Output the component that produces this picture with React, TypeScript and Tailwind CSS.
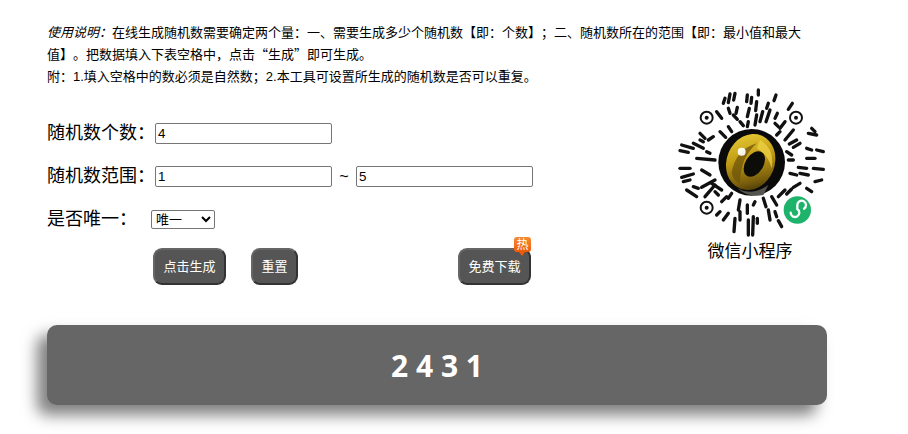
const bars: number[][] = [
  [210, 42, 205, 68], [225, 40, 221, 60], [195, 55, 190, 70], [262, 45, 260, 65], [275, 52, 273, 70], [295, 30, 295, 45],
  [290, 65, 287, 92], [348, 45, 342, 62], [325, 70, 320, 85], [397, 70, 385, 88], [170, 95, 185, 115], [205, 85, 210, 100],
  [232, 82, 228, 100], [268, 85, 262, 110], [330, 90, 318, 125], [308, 95, 300, 125], [352, 100, 345, 115], [180, 155, 197, 172],
  [205, 140, 215, 155], [240, 125, 250, 137], [290, 105, 285, 135], [265, 125, 262, 140], [220, 105, 232, 118],
  [375, 125, 360, 145], [400, 150, 375, 180], [345, 130, 355, 140], [350, 165, 360, 155], [455, 145, 465, 155], [445, 160, 470, 165],
  [410, 180, 388, 192], [420, 190, 400, 202], [470, 210, 490, 215], [440, 235, 465, 235], [380, 215, 395, 225], [440, 205, 455, 210],
  [415, 262, 440, 265], [460, 265, 490, 268], [420, 280, 445, 285], [465, 305, 485, 300], [390, 280, 410, 285], [440, 325, 455, 335],
  [400, 322, 420, 310], [380, 342, 395, 327], [355, 350, 375, 330], [385, 240, 400, 240],
  [65, 195, 100, 205], [60, 212, 85, 217], [100, 190, 130, 205], [110, 235, 165, 240], [60, 265, 90, 265], [65, 292, 100, 282],
  [125, 270, 150, 285], [70, 305, 90, 300], [125, 322, 165, 300], [80, 330, 110, 350], [100, 320, 115, 325], [120, 160, 135, 175],
  [120, 180, 130, 185], [145, 180, 160, 170], [140, 215, 150, 220], [135, 350, 165, 315], [155, 310, 185, 330],
  [175, 345, 165, 335], [200, 350, 185, 365], [215, 340, 205, 355], [240, 360, 235, 390], [262, 375, 262, 400], [285, 365, 280, 375],
  [310, 355, 318, 380], [335, 350, 350, 375], [345, 395, 350, 410], [325, 390, 330, 420], [365, 440, 355, 422], [265, 420, 265, 465],
  [280, 410, 278, 465], [292, 415, 292, 430], [240, 395, 240, 420], [225, 415, 222, 455], [205, 400, 190, 420], [180, 395, 170, 405],
];

// mini program code, coordinates are 3x the screenshot pixels
function MiniCode() {
  return (
    <svg viewBox="0 24 540 456" className="block h-[152px] w-[180px]">
      <defs>
        <linearGradient id="gold" x1="0.2" y1="0" x2="0.8" y2="1">
          <stop offset="0" stopColor="#e8cb35" />
          <stop offset="0.45" stopColor="#c09a14" />
          <stop offset="0.8" stopColor="#7a5e0c" />
          <stop offset="1" stopColor="#3f3208" />
        </linearGradient>
      </defs>
      {bars.map((b, i) => (
        <line key={i} x1={b[0]} y1={b[1]} x2={b[2]} y2={b[3]} stroke="#111" strokeWidth="10" strokeLinecap="round" />
      ))}
      {[[140, 113], [408, 113], [140, 383]].map(([x, y]) => (
        <g key={x * y}>
          <circle cx={x} cy={y} r="18" fill="none" stroke="#111" strokeWidth="6" />
          <circle cx={x} cy={y} r="6" fill="#111" />
        </g>
      ))}
      <circle cx="275" cy="247" r="100" fill="#0a0a0a" />
      <ellipse cx="272" cy="246" rx="72" ry="86" fill="url(#gold)" transform="rotate(22 272 246)" />
      <path d="M215 280 Q225 210 290 190 Q240 235 240 310 Q222 305 215 280Z" fill="#6d540b" opacity="0.75" />
      <path d="M300 180 Q345 205 335 265 Q325 225 290 205Z" fill="#f0d648" opacity="0.7" />
      <ellipse cx="283" cy="252" rx="27" ry="42" fill="#0c0c08" transform="rotate(32 283 252)" />
      <path d="M232 325 Q275 350 325 315 L310 345 Q265 355 232 325Z" fill="#55544e" />
      <circle cx="245" cy="215" r="12" fill="#fff" opacity="0.92" />
      <circle cx="412" cy="390" r="44" fill="#fff" />
      <circle cx="412" cy="390" r="41" fill="#1db36b" />
      <path d="M392 398a13 13 0 1 0 20-11v-12a13 13 0 1 1 20 11" fill="none" stroke="#fff" strokeWidth="7" strokeLinecap="round" />
    </svg>
  );
}

const btn = 'h-[37px] rounded-[9px] border-2 border-[#666] border-r-[#333] border-b-[#333] bg-[#555] text-[13px] text-white';

export default function App() {
  return (
    <div className="h-[434px] w-[908px] overflow-hidden bg-white pl-[47px] pt-[22px] font-['Liberation_Sans','Noto_Sans_CJK_SC',sans-serif] text-black">
      <p className="h-[66px] w-[760px] text-[13px] leading-[22px] [text-spacing-trim:space-all]">
        <em>使用说明：</em>在线生成随机数需要确定两个量：一、需要生成多少个随机数【即：个数】；二、随机数所在的范围【即：最小值和最大值】。把数据填入下表空格中，点击<span className="font-['Noto_Sans_CJK_SC',sans-serif] leading-none">“</span>生成<span className="font-['Noto_Sans_CJK_SC',sans-serif] leading-none">”</span>即可生成。
        <br />
        附：1.填入空格中的数必须是自然数；2.本工具可设置所生成的随机数是否可以重复。
      </p>

      <div className="flex h-[197px]">
        <div className="w-[613px] pt-[24px]">
          <div className="flex h-[43px] items-center">
            <span className="w-[108px] text-[18px]">随机数个数：</span>
            <input defaultValue="4" className="h-[21px] w-[177px] rounded-[2px] border border-[#767676] px-[2px] text-[13.33px]" />
          </div>
          <div className="flex h-[43px] items-center">
            <span className="w-[108px] text-[18px]">随机数范围：</span>
            <input defaultValue="1" className="h-[21px] w-[177px] rounded-[2px] border border-[#767676] px-[2px] text-[13.33px]" />
            <span className="w-[24px] text-center text-[16px]">~</span>
            <input defaultValue="5" className="h-[21px] w-[177px] rounded-[2px] border border-[#767676] px-[2px] text-[13.33px]" />
          </div>
          <div className="flex h-[43px] items-center">
            <span className="w-[104px] text-[18px]">是否唯一：</span>
            <select className="h-[19px] w-[64px] rounded-[2px] border border-[#767676] text-[13px]">
              <option>唯一</option>
              <option>不唯一</option>
            </select>
          </div>
          <div className="mt-[7px] flex pl-[106px]">
            <button className={`${btn} w-[73px]`}>点击生成</button>
            <button className={`${btn} ml-[25px] w-[47px]`}>重置</button>
            <div className="relative ml-[160px]">
              <button className={`${btn} w-[73px]`}>免费下载</button>
              <span className="absolute right-0 top-[-11px] flex h-[15px] w-[17px] items-center justify-center rounded-[3px] bg-gradient-to-b from-[#f58a2e] to-[#ee5a08] text-[12px] leading-none text-white">
                热
                <span className="absolute bottom-[-4px] left-[5px] h-0 w-0 border-x-[3px] border-t-[4px] border-x-transparent border-t-[#ee5a08]" />
              </span>
            </div>
          </div>
        </div>
        <div className="flex w-[180px] flex-col items-center">
          <MiniCode />
          <span className="mt-[2px] text-[17px] leading-[20px]">微信小程序</span>
        </div>
      </div>

      <div className="mt-[40px] flex h-[80px] w-[780px] items-center justify-center rounded-[10px] bg-[#666] font-['Open_Sans',sans-serif] text-[30px] font-bold text-white shadow-[-10px_10px_15px_rgba(0,0,0,0.5)]">
        2 4 3 1
      </div>
    </div>
  );
}
